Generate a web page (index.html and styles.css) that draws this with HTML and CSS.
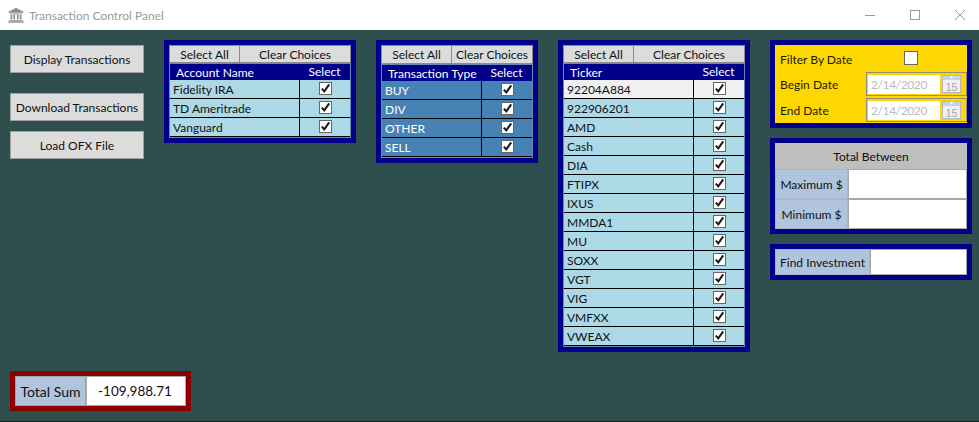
FILE: index.html
```html
<!DOCTYPE html>
<html lang="en">
<head>
<meta charset="utf-8">
<title>Transaction Control Panel</title>
<link rel="stylesheet" href="styles.css">
</head>
<body>
<svg class="defs" width="0" height="0" aria-hidden="true">
  <symbol id="chk" viewBox="0 0 13 13"><path d="M2.8 6.6 L5.3 9.4 L10.2 2.4" fill="none" stroke="#1c1c1c" stroke-width="2.1"/></symbol>
</svg>
<header class="titlebar">
  <div class="title">
    <svg class="bank" width="16" height="16" viewBox="0 0 16 16">
      <path d="M8 .8 L15.4 4.8 V5.8 H.6 V4.8 Z" fill="#8d8d8d"/>
      <rect x="1.6" y="6.4" width="12.8" height="1.2" fill="#a5a5a5"/>
      <path d="M2.6 8H4.2V12.6H2.6ZM5.4 8H7V12.6H5.4ZM9 8H10.6V12.6H9ZM11.8 8H13.4V12.6H11.8Z" fill="#8a8a8a"/>
      <rect x="1.4" y="13" width="13.2" height="1.1" fill="#a5a5a5"/>
      <rect x=".4" y="14.3" width="15.2" height="1.4" fill="#8a8a8a"/>
    </svg>
    <span>Transaction Control Panel</span>
  </div>
  <div class="winctl">
    <svg width="10" height="10" viewBox="0 0 10 10"><path d="M0 5.5H10" stroke="#999"/></svg>
    <svg width="10" height="10" viewBox="0 0 10 10"><rect x=".5" y=".5" width="9" height="9" fill="none" stroke="#999"/></svg>
    <svg width="10" height="10" viewBox="0 0 10 10"><path d="M0 0L10 10M10 0L0 10" stroke="#999"/></svg>
  </div>
</header>
<main class="app">
  <div class="col-left">
    <button class="action first">Display Transactions</button>
    <button class="action second">Download Transactions</button>
    <button class="action third">Load OFX File</button>
    <div class="sum">
      <div class="sum-label">Total Sum</div>
      <div class="sum-value">-109,988.71</div>
    </div>
  </div>

  <section class="panel w192">
    <div class="tools"><button class="tool sel">Select All</button><button class="tool clr">Clear Choices</button></div>
    <div class="grid">
      <div class="row head"><div class="name pad-head">Account Name</div><div class="pick">Select</div></div>
      <div class="row"><div class="name">Fidelity IRA</div><div class="pick"><span class="check"><svg><use href="#chk"/></svg></span></div></div>
      <div class="row"><div class="name">TD Ameritrade</div><div class="pick"><span class="check"><svg><use href="#chk"/></svg></span></div></div>
      <div class="row"><div class="name">Vanguard</div><div class="pick"><span class="check"><svg><use href="#chk"/></svg></span></div></div>
    </div>
  </section>

  <section class="panel w162">
    <div class="tools tall"><button class="tool sel">Select All</button><button class="tool clr">Clear Choices</button></div>
    <div class="grid steel">
      <div class="row head"><div class="name pad-head">Transaction Type</div><div class="pick">Select</div></div>
      <div class="row"><div class="name">BUY</div><div class="pick"><span class="check"><svg><use href="#chk"/></svg></span></div></div>
      <div class="row"><div class="name">DIV</div><div class="pick"><span class="check"><svg><use href="#chk"/></svg></span></div></div>
      <div class="row"><div class="name">OTHER</div><div class="pick"><span class="check"><svg><use href="#chk"/></svg></span></div></div>
      <div class="row"><div class="name">SELL</div><div class="pick"><span class="check"><svg><use href="#chk"/></svg></span></div></div>
    </div>
  </section>

  <section class="panel w192">
    <div class="tools"><button class="tool sel">Select All</button><button class="tool clr">Clear Choices</button></div>
    <div class="grid">
      <div class="row head"><div class="name pad-head">Ticker</div><div class="pick">Select</div></div>
      <div class="row hot"><div class="name">92204A884</div><div class="pick"><span class="check"><svg><use href="#chk"/></svg></span></div></div>
      <div class="row"><div class="name">922906201</div><div class="pick"><span class="check"><svg><use href="#chk"/></svg></span></div></div>
      <div class="row"><div class="name">AMD</div><div class="pick"><span class="check"><svg><use href="#chk"/></svg></span></div></div>
      <div class="row"><div class="name">Cash</div><div class="pick"><span class="check"><svg><use href="#chk"/></svg></span></div></div>
      <div class="row"><div class="name">DIA</div><div class="pick"><span class="check"><svg><use href="#chk"/></svg></span></div></div>
      <div class="row"><div class="name">FTIPX</div><div class="pick"><span class="check"><svg><use href="#chk"/></svg></span></div></div>
      <div class="row"><div class="name">IXUS</div><div class="pick"><span class="check"><svg><use href="#chk"/></svg></span></div></div>
      <div class="row"><div class="name">MMDA1</div><div class="pick"><span class="check"><svg><use href="#chk"/></svg></span></div></div>
      <div class="row"><div class="name">MU</div><div class="pick"><span class="check"><svg><use href="#chk"/></svg></span></div></div>
      <div class="row"><div class="name">SOXX</div><div class="pick"><span class="check"><svg><use href="#chk"/></svg></span></div></div>
      <div class="row"><div class="name">VGT</div><div class="pick"><span class="check"><svg><use href="#chk"/></svg></span></div></div>
      <div class="row"><div class="name">VIG</div><div class="pick"><span class="check"><svg><use href="#chk"/></svg></span></div></div>
      <div class="row"><div class="name">VMFXX</div><div class="pick"><span class="check"><svg><use href="#chk"/></svg></span></div></div>
      <div class="row"><div class="name">VWEAX</div><div class="pick"><span class="check"><svg><use href="#chk"/></svg></span></div></div>
    </div>
  </section>

  <div class="col-right">
    <section class="panel date-panel">
      <div class="date-row top"><span class="filter-label">Filter By Date</span><span class="check empty"></span></div>
      <div class="date-row"><span>Begin Date</span><div class="date"><span class="date-text">2/14/2020</span><svg class="cal" width="19" height="18" viewBox="0 0 19 18"><rect x=".5" y=".5" width="18" height="17" fill="#eef1f4" stroke="#b8bcc0"/><rect x="1" y="1" width="17" height="4" fill="#c3d5ea"/><rect x="8.5" y="1" width="2" height="2" fill="#fff"/><text x="9.5" y="15.5" text-anchor="middle" class="calnum">15</text></svg></div></div>
      <div class="date-row"><span>End Date</span><div class="date"><span class="date-text">2/14/2020</span><svg class="cal" width="19" height="18" viewBox="0 0 19 18"><rect x=".5" y=".5" width="18" height="17" fill="#eef1f4" stroke="#b8bcc0"/><rect x="1" y="1" width="17" height="4" fill="#c3d5ea"/><rect x="8.5" y="1" width="2" height="2" fill="#fff"/><text x="9.5" y="15.5" text-anchor="middle" class="calnum">15</text></svg></div></div>
    </section>
    <section class="panel between">
      <div class="between-head">Total Between</div>
      <div class="between-row"><div class="blue-label">Maximum $</div><div class="field"></div></div>
      <div class="between-row"><div class="blue-label">Minimum $</div><div class="field"></div></div>
    </section>
    <section class="panel find">
      <div class="blue-label find-label">Find Investment</div><div class="field"></div>
    </section>
  </div>
</main>
</body>
</html>
```

FILE: styles.css
```css
* { box-sizing: border-box; }
html, body { margin: 0; height: 422px; overflow: hidden; }
body {
  display: flex;
  flex-direction: column;
  font-family: Lato, "Open Sans", sans-serif;
  font-size: 12px;
  color: #111;
  background: #2f4f4f;
  white-space: nowrap;
}
.defs { position: absolute; }
.calnum { font: 11px "Liberation Sans", sans-serif; fill: #a8a8a8; }

.titlebar {
  flex: 0 0 30px;
  display: flex;
  justify-content: space-between;
  align-items: center;
  background: #fff;
}
.title { display: flex; align-items: center; gap: 5px; padding-left: 8px; color: #9a9a9a; }
.winctl { display: flex; gap: 35px; padding-right: 14px; }

.app {
  flex: 1;
  display: flex;
  gap: 20px;
  align-items: flex-start;
  padding: 10px 7px 10px 10px;
  border-bottom: 1px solid #14201f;
}
.col-left { width: 134px; height: 371px; display: flex; flex-direction: column; position: relative; }
.action {
  height: 28px;
  padding: 0;
  background: #dcdcdc;
  border: 1px solid #a0a0a0;
  color: #111;
  font: inherit;
}
.first { margin-top: 5px; }
.second { margin-top: 20px; }
.third { margin-top: 10px; }

.sum {
  width: 181px;
  height: 40px;
  margin-top: auto;
  display: flex;
  border: 5px solid #8b0000;
  flex-shrink: 0;
}
.sum-label { width: 71px; display: flex; align-items: center; justify-content: center; background: #b0c4de; border: 1px solid #9aa5b5; font-size: 14px; }
.sum-value { flex: 1; display: flex; align-items: center; justify-content: center; padding-right: 2px; background: #fff; border: 1px solid #a9a9a9; font-size: 13.5px; }

.panel { border: 5px solid #00008b; }
.w192 { width: 192px; }
.w162 { width: 162px; }
.tools { display: flex; height: 18px; }
.tools.tall { height: 19px; }
.tool {
  padding: 0;
  background: #dcdcdc;
  border: 1px solid #8c8c8c;
  font: inherit;
  color: #111;
}
.sel { flex: 0 0 71px; }
.clr { flex: 1; margin-left: -1px; }

.grid { border: 1px solid #688caf; background: #add8e6; }
.grid.steel { background: #4682b4; color: #fff; }
.row { display: flex; height: 19px; border-bottom: 1px solid #000; }
.row.head { height: 16px; background: #00008b; color: #fff; border-bottom: 0; }
.row.hot { background: #f0f0f0; color: #111; }
.name { flex: 1; min-width: 0; padding-left: 3px; line-height: 20px; }
.head .name, .head .pick { line-height: 18px; }
.pad-head { padding-left: 6px; }
.pick { flex: 0 0 51px; display: flex; align-items: center; justify-content: center; border-left: 1px solid #000; }
.head .pick { border-left: 0; }
.check { display: block; width: 13px; height: 13px; margin-top: -1px; background: #fff; border: 1px solid #666; position: relative; }
.check svg { position: absolute; left: -1px; top: -1px; width: 13px; height: 13px; }
.empty { width: 14px; height: 14px; margin: 0; }

.col-right { width: 202px; display: flex; flex-direction: column; gap: 10px; }
.date-panel { background: #ffd700; height: 88px; }
.date-row { display: flex; align-items: center; justify-content: space-between; height: 26px; padding-left: 5px; color: #1a1a00; }
.date-row.top .empty { margin-right: 49px; }
.filter-label { margin-top: 2px; }
.date {
  width: 101px;
  height: 24px;
  display: flex;
  align-items: center;
  justify-content: space-between;
  padding: 0 5px 0 1px;
  border: 1px solid #8f8f78;
  background: #ffd700;
}
.date-text { flex: 0 0 72px; height: 19px; line-height: 19px; padding-left: 3px; letter-spacing: -0.4px; background: #fff; color: #bbb; }
.cal { flex: none; }

.between { height: 96px; }
.between-head { height: 26px; background: #bebebe; display: flex; align-items: center; justify-content: center; }
.between-row { display: flex; height: 30px; }
.blue-label { display: flex; align-items: center; justify-content: center; background: #b0c4de; border: 1px solid #a5b5cc; }
.between-row .blue-label { flex: 0 0 73px; }
.field { flex: 1; background: #fff; border: 1px solid #a9a9a9; }
.find { display: flex; height: 36px; }
.find-label { flex: 0 0 95px; }
```
